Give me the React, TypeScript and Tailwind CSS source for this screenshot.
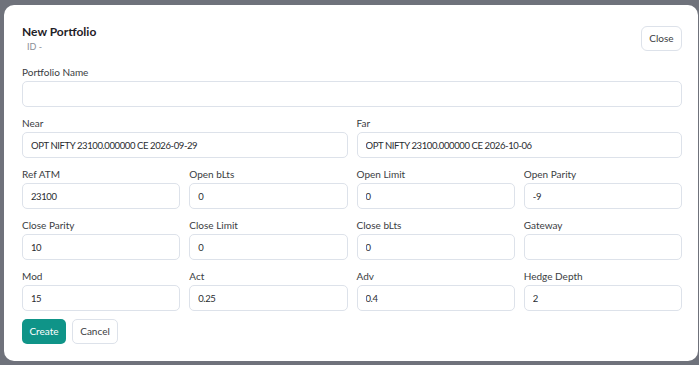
import { useState } from 'react';

type Field = { label: string; value: string; span?: 2 | 4 };

const ROWS: Field[][] = [
  [{ label: 'Portfolio Name', value: '', span: 4 }],
  [
    { label: 'Near', value: 'OPT NIFTY 23100.000000 CE 2026-09-29', span: 2 },
    { label: 'Far', value: 'OPT NIFTY 23100.000000 CE 2026-10-06', span: 2 },
  ],
  [
    { label: 'Ref ATM', value: '23100' },
    { label: 'Open bLts', value: '0' },
    { label: 'Open Limit', value: '0' },
    { label: 'Open Parity', value: '-9' },
  ],
  [
    { label: 'Close Parity', value: '10' },
    { label: 'Close Limit', value: '0' },
    { label: 'Close bLts', value: '0' },
    { label: 'Gateway', value: '' },
  ],
  [
    { label: 'Mod', value: '15' },
    { label: 'Act', value: '0.25' },
    { label: 'Adv', value: '0.4' },
    { label: 'Hedge Depth', value: '2' },
  ],
];

function FormField({ field }: { field: Field }) {
  const [value, setValue] = useState(field.value);
  const span =
    field.span === 4 ? 'col-span-4' : field.span === 2 ? 'col-span-2' : 'col-span-1';
  return (
    <label className={`${span} flex flex-col`}>
      <span className="text-[10px] leading-[13px] text-[#3a3d42] mb-[2px]">{field.label}</span>
      <input
        value={value}
        onChange={(e) => setValue(e.target.value)}
        className="h-[26px] w-full rounded-[5px] border border-[#dde2ea] bg-white px-[8px] text-[9.5px] tracking-[-0.4px] text-[#2a2c30] outline-none"
      />
    </label>
  );
}

export default function App() {
  return (
    <div
      className="h-screen w-full overflow-hidden bg-[#6f727b] pt-[5px] pl-[4px]"
      style={{ fontFamily: 'Lato, "Noto Sans", sans-serif' }}
    >
      <div className="h-[356px] w-[694px] rounded-[10px] bg-white pl-[18px] pr-[16px] pt-[19px]">
        {/* Header */}
        <div className="flex items-start justify-between">
          <div>
            <h2 className="text-[12px] leading-[16px] font-bold text-[#1f2227]">New Portfolio</h2>
            <p className="pl-[5px] text-[9px] leading-[14px] text-[#8a8e95]">ID -</p>
          </div>
          <button className="mt-[2px] h-[25px] w-[41px] rounded-[6px] border border-[#dde2ea] text-[10px] text-[#3a3d42]">
            Close
          </button>
        </div>

        {/* Fields */}
        <div className="mt-[12px] grid grid-cols-4 gap-x-[9px] gap-y-[10px]">
          {ROWS.flat().map((f) => (
            <FormField key={f.label} field={f} />
          ))}
        </div>

        {/* Actions */}
        <div className="mt-[8px] flex gap-[6px]">
          <button className="h-[25px] w-[44px] rounded-[5px] bg-[#0f9488] text-[10px] text-white">
            Create
          </button>
          <button className="h-[25px] w-[46px] rounded-[5px] border border-[#dde2ea] bg-white text-[10px] text-[#3a3d42]">
            Cancel
          </button>
        </div>
      </div>
    </div>
  );
}
